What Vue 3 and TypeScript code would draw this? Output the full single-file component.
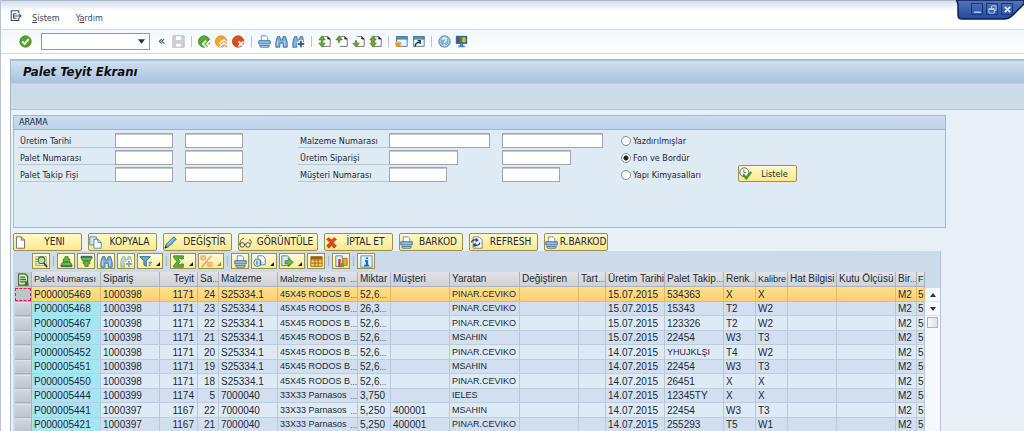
<script setup lang="ts">
import { ref } from 'vue'

interface Tool { icon: string; label: string; menu?: boolean; off?: boolean }
interface Column { title: string; width: number; end?: boolean; caps?: boolean; more?: boolean; snug?: boolean }

const command = ref('')
const filter = ref('fon')
const selected = ref(0)

const systemTools: Tool[][] = [
  [{ icon: 'back', label: 'Geri' }, { icon: 'exit', label: 'Çıkış' }, { icon: 'cancel', label: 'İptal' }],
  [{ icon: 'printer', label: 'Yazdır' }, { icon: 'find', label: 'Bul' }, { icon: 'findnext', label: 'Sonrakini bul' }],
  [
    { icon: 'firstpage', label: 'İlk sayfa' }, { icon: 'prevpage', label: 'Önceki sayfa' },
    { icon: 'nextpage', label: 'Sonraki sayfa' }, { icon: 'lastpage', label: 'Son sayfa' },
  ],
  [{ icon: 'newwin', label: 'Yeni oturum' }, { icon: 'shortcut', label: 'Kısayol' }],
  [{ icon: 'help', label: 'Yardım' }, { icon: 'monitor', label: 'Yerel düzen' }],
]

const actions = [
  { icon: 'page', label: 'YENI', width: 69 },
  { icon: 'copy', label: 'KOPYALA', width: 69 },
  { icon: 'pencil', label: 'DEĞİŞTİR', width: 69 },
  { icon: 'glasses', label: 'GÖRÜNTÜLE', width: 80 },
  { icon: 'redx', label: 'İPTAL ET', width: 69 },
  { icon: 'printer', label: 'BARKOD', width: 64 },
  { icon: 'refresh', label: 'REFRESH', width: 69 },
  { icon: 'printer', label: 'R.BARKOD', width: 64 },
]

const gridTools: Tool[][] = [
  [{ icon: 'detail', label: 'Ayrıntı' }],
  [
    { icon: 'sortup', label: 'Artan sırala' }, { icon: 'sortdown', label: 'Azalan sırala' },
    { icon: 'find', label: 'Bul' }, { icon: 'findnext', label: 'Sonrakini bul', off: true },
    { icon: 'funnel', label: 'Filtre', menu: true },
  ],
  [{ icon: 'sum', label: 'Toplam', menu: true }, { icon: 'subtotal', label: 'Alt toplam', menu: true, off: true }],
  [
    { icon: 'printer', label: 'Yazdır' }, { icon: 'views', label: 'Görünümler', menu: true },
    { icon: 'export', label: 'Dışa aktar', menu: true }, { icon: 'layout', label: 'Düzen' },
  ],
  [{ icon: 'chart', label: 'Grafik' }],
  [{ icon: 'info', label: 'Bilgi' }],
]

const columns: Column[] = [
  { title: 'Palet Numarası', width: 69, snug: true },
  { title: 'Sipariş', width: 59 },
  { title: 'Teyit', width: 38, end: true },
  { title: 'Sa', width: 21, end: true, more: true },
  { title: 'Malzeme', width: 59 },
  { title: 'Malzeme kısa m', width: 80, caps: true, more: true, snug: true },
  { title: 'Miktar', width: 33 },
  { title: 'Müşteri', width: 59 },
  { title: 'Yaratan', width: 70, caps: true },
  { title: 'Değiştiren', width: 59 },
  { title: 'Tart', width: 27, more: true },
  { title: 'Üretim Tarihi', width: 59 },
  { title: 'Palet Takip', width: 59, more: true },
  { title: 'Renk', width: 32, more: true },
  { title: 'Kalibre', width: 32, snug: true },
  { title: 'Hat Bilgisi', width: 49 },
  { title: 'Kutu Ölçüsü', width: 59 },
  { title: 'Bir', width: 21, more: true },
  { title: 'F', width: 8, snug: true },
]

const rodos = '45X45 RODOS B~'
const parna = '33X33 Parnasos~'
function row(no: string, order: string, teyit: string, sa: string, mat: string, text: string, qty: string,
  customer: string, user: string, date: string, slip: string, tone: string, cal: string): string[] {
  return [no, order, teyit, sa, mat, text, qty, customer, user, '', '', date, slip, tone, cal, '', '', 'M2', '5']
}
const rows: string[][] = [
  row('P000005469', '1000398', '1171', '24', 'S25334.1', rodos, '52,6~', '', 'PINAR.CEVIKO', '15.07.2015', '534363', 'X', 'X'),
  row('P000005468', '1000398', '1171', '23', 'S25334.1', rodos, '26,3~', '', 'PINAR.CEVIKO', '15.07.2015', '15343', 'T2', 'W2'),
  row('P000005467', '1000398', '1171', '22', 'S25334.1', rodos, '52,6~', '', 'PINAR.CEVIKO', '15.07.2015', '123326', 'T2', 'W2'),
  row('P000005459', '1000398', '1171', '21', 'S25334.1', rodos, '52,6~', '', 'MSAHIN', '15.07.2015', '22454', 'W3', 'T3'),
  row('P000005452', '1000398', '1171', '20', 'S25334.1', rodos, '52,6~', '', 'PINAR.CEVIKO', '14.07.2015', 'YHUJKLŞI', 'T4', 'W2'),
  row('P000005451', '1000398', '1171', '19', 'S25334.1', rodos, '52,6~', '', 'MSAHIN', '14.07.2015', '22454', 'W3', 'T3'),
  row('P000005450', '1000398', '1171', '18', 'S25334.1', rodos, '52,6~', '', 'PINAR.CEVIKO', '14.07.2015', '26451', 'X', 'X'),
  row('P000005444', '1000399', '1174', '5', '7000040', parna, '3,750', '', 'IELES', '14.07.2015', '12345TY', 'X', 'X'),
  row('P000005441', '1000397', '1167', '22', '7000040', parna, '5,250', '400001', 'MSAHIN', '14.07.2015', '22454', 'W3', 'T3'),
  row('P000005421', '1000397', '1167', '21', '7000040', parna, '5,250', '400001', 'PINAR.CEVIKO', '14.07.2015', '255293', 'T5', 'W1'),
]
const isCut = (v: string) => v.endsWith('~')
const plain = (v: string) => v.replace('~', '')
</script>

<template>
  <div class="app">
    <svg class="defs" aria-hidden="true">
      <symbol id="i-session" viewBox="0 0 16 16"><path d="M11 4V1H1v13h10v-3M4 5h4M4 5v6h4M4 8h10M11 5l3 3-3 3" fill="none" stroke="#34496e" stroke-width="1.4" /></symbol>
      <symbol id="i-check" viewBox="0 0 16 16"><circle cx="8" cy="8" r="7" fill="#59a52c" stroke="#3f8220" /><path d="M4 8l3 3 5-6" fill="none" stroke="#fff" stroke-width="2.2" /></symbol>
      <symbol id="i-save" viewBox="0 0 16 16"><path d="M1 1h14v14H1z" fill="#d2d5d9" stroke="#b4b8bd" /><path d="M4 1h8v6H4zM4 10h8v5H4z" fill="#fff" stroke="#b9bdc2" /></symbol>
      <symbol id="i-back" viewBox="0 0 16 16"><circle cx="7.500" cy="8" r="7" fill="#5aa832" stroke="#3f8424" /><path d="M10 7l-4 4 4 4M15 7l-4 4 4 4" fill="none" stroke="#fff" stroke-width="2" /></symbol>
      <symbol id="i-exit" viewBox="0 0 16 16"><circle cx="7.500" cy="8" r="7" fill="#f7a823" stroke="#dd8a10" /><path d="M6 11l5-4 4 4M6 15l5-4 4 4" fill="none" stroke="#fff" stroke-width="3" /><path d="M7 11l4-3 4 3M7 15l4-3 4 3" fill="none" stroke="#d8551c" /></symbol>
      <symbol id="i-cancel" viewBox="0 0 16 16"><circle cx="7.500" cy="8" r="7" fill="#d9501a" stroke="#b63c10" /><path d="M8 8l6 6M14 8l-6 6" stroke="#fff" stroke-width="2.2" /></symbol>
      <symbol id="i-printer" viewBox="0 0 16 16"><path d="M4 7V1h6l2 2v4" fill="#fff" stroke="#5580a5" /><path d="M1 7h14v4H1z" fill="#8fc0e4" stroke="#2c6594" /><path d="M2 13h12l-1 2H3z" fill="#cfe4f4" stroke="#2c6594" /></symbol>
      <symbol id="i-find" viewBox="0 0 16 16"><path d="M3 2h3l1 4h2l1-4h3l2 7v6h-5v-5H6v5H1V9z" fill="#7cb2dc" stroke="#2d6291" /><path d="M3 7v6M12 7v6" stroke="#c6e0f3" /></symbol>
      <symbol id="i-findnext" viewBox="0 0 16 16"><path d="M3 2h3l1 4h2l1-4h3l1 5v7h-4v-4H6v5H1V9z" fill="#7cb2dc" stroke="#2d6291" /><path d="M11 6v9M6 11h9" stroke="#fff" stroke-width="5" /><path d="M11 7v8M7 11h8" stroke="#2d6291" stroke-width="2.4" /></symbol>
      <symbol id="i-doc" viewBox="0 0 16 16"><path d="M6 2h6l3 3v9H6" fill="#fff" stroke="#555d66" /><path d="M12 2v3h3z" fill="#2d3338" stroke="#2d3338" /></symbol>
      <symbol id="i-firstpage" viewBox="0 0 16 16"><use href="#i-doc" /><path d="M1 6l4-5 4 5H6v4h3l-4 5-4-5h3V6z" fill="#65a92e" stroke="#3e7d1c" stroke-width=".8" /></symbol>
      <symbol id="i-prevpage" viewBox="0 0 16 16"><use href="#i-doc" /><path d="M1 6l4-5 4 5H6v3H4V6z" fill="#65a92e" stroke="#3e7d1c" stroke-width=".8" /></symbol>
      <symbol id="i-nextpage" viewBox="0 0 16 16"><use href="#i-doc" /><path d="M1 10h3V7h2v3h3l-4 5z" fill="#65a92e" stroke="#3e7d1c" stroke-width=".8" /></symbol>
      <symbol id="i-lastpage" viewBox="0 0 16 16"><use href="#i-doc" /><path d="M1 6l4-5 4 5H7v4h2l-4 5-4-5h2V6z" fill="#65a92e" stroke="#3e7d1c" stroke-width=".8" /></symbol>
      <symbol id="i-newwin" viewBox="0 0 16 16"><path d="M2 2h13v12H2z" fill="#e9f3fb" stroke="#3a6d9a" /><path d="M2 2h13v3H2z" fill="#5c9bd0" stroke="#3a6d9a" /><path d="M4 8v7M0 11h8M1 9l6 5M7 9l-6 5" stroke="#f29a1c" stroke-width="1.6" /></symbol>
      <symbol id="i-shortcut" viewBox="0 0 16 16"><path d="M2 2h13v12H2z" fill="#e9f3fb" stroke="#3a6d9a" /><path d="M2 2h13v3H2z" fill="#5c9bd0" stroke="#3a6d9a" /><path d="M4 14c0-4 2-5 5-5M7 7h3v4" fill="none" stroke="#222" stroke-width="1.6" /></symbol>
      <symbol id="i-help" viewBox="0 0 16 16"><circle cx="8" cy="8" r="7" fill="#7fb1d8" stroke="#41779f" /><circle cx="8" cy="8" r="5.500" fill="none" stroke="#cfe3f2" /><path d="M6 6c0-3 4-3 4 0 0 2-2 1-2 4M8 11v2" fill="none" stroke="#fff" stroke-width="1.6" /></symbol>
      <symbol id="i-monitor" viewBox="0 0 16 16"><path d="M1 1h14v10H1z" fill="#1f6eb4" /><path d="M3 3h4v6H3z" fill="#d5281e" /><path d="M6 3h4v6H6z" fill="#2f9b37" /><path d="M9 3h4v6H9z" fill="#f0b61d" /><path d="M6 11h4v2h2v2H4v-2h2z" fill="#3b8ac6" /></symbol>
      <symbol id="i-page" viewBox="0 0 16 16"><path d="M3 1h6l4 4v10H3z" fill="#fff" stroke="#555" /><path d="M9 1v4h4" fill="none" stroke="#555" /></symbol>
      <symbol id="i-copy" viewBox="0 0 16 16"><path d="M1 1h8v10H1z" fill="#d9eaf7" stroke="#3a74a6" /><path d="M6 4h5l4 4v7H6z" fill="#fff" stroke="#3a74a6" /><path d="M11 4v4h4" fill="none" stroke="#3a74a6" /></symbol>
      <symbol id="i-pencil" viewBox="0 0 16 16"><path d="M1 15l2-5 9-9 3 3-9 9z" fill="#69a9dc" stroke="#235f94" /><path d="M1 15l1-3 2 2z" fill="#222" /><path d="M5 10l7-7" stroke="#c8e2f5" /></symbol>
      <symbol id="i-glasses" viewBox="0 0 16 16"><circle cx="4" cy="11" r="2.800" fill="#e9f3e0" stroke="#333" /><circle cx="11" cy="11" r="2.800" fill="#e9f3e0" stroke="#333" /><path d="M1 11C1 6 3 3 6 3M7 10h1M14 10c2-3 1-6-2-5" fill="none" stroke="#333" /></symbol>
      <symbol id="i-redx" viewBox="0 0 16 16"><path d="M2 4l3-2 3 3 3-3 3 2-4 4 4 4-3 3-3-4-3 4-3-3 4-4z" fill="#e0491c" stroke="#a82c0c" stroke-width=".8" /></symbol>
      <symbol id="i-refresh" viewBox="0 0 16 16"><path d="M4 1h7l4 4v10H4z" fill="#fff" stroke="#666" /><path d="M2 8c0-3 3-4 6-3M12 8c0 3-3 4-6 3" fill="none" stroke="#1e4fa8" stroke-width="1.800" /><path d="M7 2l4 3-4 3zM7 8v6l-4-3z" fill="#1e4fa8" /></symbol>
      <symbol id="i-run" viewBox="0 0 16 16"><circle cx="6.500" cy="6.500" r="5.500" fill="#fff" stroke="#444" /><path d="M6 3v4h3" fill="none" stroke="#444" /><path d="M5 9l4 5 6-8" fill="none" stroke="#3f9a35" stroke-width="2.800" /></symbol>
      <symbol id="i-detail" viewBox="0 0 16 16"><path d="M1 2h13v11H1z" fill="#fff" stroke="#9a9a80" /><path d="M1 5h4M1 8h3M1 11h5" stroke="#6ba052" /><circle cx="8" cy="6.500" r="4.200" fill="#b9dd9f" stroke="#3c6b2c" stroke-width="1.400" /><path d="M11 10l4 5" stroke="#333" stroke-width="2" /></symbol>
      <symbol id="i-sortup" viewBox="0 0 16 16"><path d="M6 2h4v3h2v3H4V5h2z" fill="#6cb544" stroke="#3c7d29" /><path d="M3 9h10l2 4H1z" fill="#6cb544" stroke="#33752d" /><path d="M1 14h14" stroke="#2e6e86" stroke-width="2" /></symbol>
      <symbol id="i-sortdown" viewBox="0 0 16 16"><path d="M1 2h14" stroke="#2e6e86" stroke-width="2" /><path d="M1 3h14l-2 4H3z" fill="#6cb544" stroke="#33752d" /><path d="M4 8h8v3h-2v3H6v-3H4z" fill="#6cb544" stroke="#3c7d29" /></symbol>
      <symbol id="i-funnel" viewBox="0 0 16 16"><path d="M1 2h13L9 7v7l-3-2V7z" fill="#6aa9da" stroke="#245f92" /><path d="M12 9h4M12 11h3M12 13h2" stroke="#245f92" /></symbol>
      <symbol id="i-sum" viewBox="0 0 16 16"><path d="M2 1h12v4h-3V4H7l3 4-3 4h4v-1h3v4H2v-2l4-5-4-5z" fill="#62b33b" stroke="#357a25" /></symbol>
      <symbol id="i-subtotal" viewBox="0 0 16 16"><path d="M1 1h6v5H1zM9 9h6v5H9z" fill="#f08a58" stroke="#d0602c" /><path d="M14 1L2 15" stroke="#d0602c" stroke-width="2" /></symbol>
      <symbol id="i-views" viewBox="0 0 16 16"><path d="M6 1h6l3 3v8H6z" fill="#fff" stroke="#3570a5" /><circle cx="5.500" cy="9.500" r="4.500" fill="#d5e9f8" stroke="#2d6ba5" /><path d="M5 7v5M9 6v6" stroke="#2d6ba5" stroke-width="1.400" /></symbol>
      <symbol id="i-export" viewBox="0 0 16 16"><path d="M1 1h7l3 3v9H1z" fill="#d8e8f5" stroke="#3570a5" /><path d="M5 7h4V4l6 5-6 5v-3H5z" fill="#6cb83f" stroke="#3a7c25" /></symbol>
      <symbol id="i-layout" viewBox="0 0 16 16"><path d="M1 2h14v12H1z" fill="#f8cf55" stroke="#85631c" /><path d="M1 2h14v3H1z" fill="#b25a20" /><path d="M1 6h14M1 10h14M6 2v12M10 2v12" stroke="#85631c" /></symbol>
      <symbol id="i-chart" viewBox="0 0 16 16"><path d="M1 1h8v13H1z" fill="#dcecf8" stroke="#3570a5" /><path d="M4 5h3v10H4z" fill="#d83a1c" /><path d="M7 10h4v5H7z" fill="#4fa53a" /><path d="M10 4h5v9h-5z" fill="#f0a52a" stroke="#b36f14" /></symbol>
      <symbol id="i-info" viewBox="0 0 16 16"><path d="M1 1h14v14H1z" fill="#dff1fb" stroke="#2b8cc4" /><path d="M7 3h3v2H7zM6 6h4v6h1v2H5v-2h2V8H6z" fill="#1674b5" /></symbol>
      <symbol id="i-rows" viewBox="0 0 16 16"><path d="M2 1h8l3 3v11H2z" fill="#d9efc5" stroke="#3f6b2c" stroke-width="1.400" /><path d="M4 5h6M4 8h7M4 11h7" stroke="#3f6b2c" stroke-width="1.600" /><path d="M11 9l4 6h-6z" fill="#3f6b2c" /></symbol>
    </svg>

    <header class="menubar">
      <svg class="ico session"><use href="#i-session" /></svg>
      <nav class="menus">
        <a href="#sistem"><u>S</u>istem</a>
        <a href="#yardim">Y<u>a</u>rdım</a>
      </nav>
      <div class="window">
        <svg class="shape" viewBox="0 0 68 21" aria-hidden="true">
          <defs><linearGradient id="g-win" x1="0" y1="0" x2="0" y2="1"><stop offset="0" stop-color="#5377b8" /><stop offset="1" stop-color="#2348a0" /></linearGradient></defs>
          <path d="M0 0h68v4L57 15c-3 3-5 4-9 4H6c-4 0-4-2-4-5V5C2 2 1 1 0 0z" fill="url(#g-win)" stroke="#101c48" stroke-width="1.500" />
        </svg>
        <div class="winbtns">
          <button type="button" aria-label="Küçült"><svg viewBox="0 0 10 10"><path d="M1 8h8" stroke="#c5d5f3" stroke-width="1.500" /></svg></button>
          <button type="button" aria-label="Önceki boyut"><svg viewBox="0 0 10 10"><path d="M4 4V1h5v5H7M1 4h6v5H1zM1 5h6" fill="none" stroke="#c5d5f3" /></svg></button>
          <button type="button" aria-label="Kapat"><svg viewBox="0 0 10 10"><path d="M2 2l6 6M8 2L2 8" stroke="#dbe5f8" stroke-width="2" /></svg></button>
        </div>
      </div>
    </header>

    <div class="toolbar">
      <button type="button" class="tool" aria-label="Giriş"><svg class="ico"><use href="#i-check" /></svg></button>
      <div class="command">
        <input v-model="command" type="text" aria-label="Komut alanı">
        <button type="button" aria-label="Komut geçmişi"><svg viewBox="0 0 8 5"><path d="M0 0h8L4 5z" fill="#1d3461" /></svg></button>
      </div>
      <button type="button" class="tool chev" aria-label="Komut alanını gizle">«</button>
      <button type="button" class="tool" aria-label="Kaydet"><svg class="ico"><use href="#i-save" /></svg></button>
      <div v-for="(group, g) in systemTools" :key="g" class="group">
        <button v-for="t in group" :key="t.icon" type="button" class="tool" :aria-label="t.label">
          <svg class="ico"><use :href="'#i-' + t.icon" /></svg>
        </button>
      </div>
    </div>

    <main class="screen">
      <h1>Palet Teyit Ekranı</h1>
      <div class="appbar"></div>

      <section class="work">
        <form class="search" @submit.prevent>
          <h2>ARAMA</h2>
          <div class="fields">
            <div class="block first">
              <label for="f-date">Üretim Tarihi</label><input id="f-date" type="text"><input type="text" aria-label="Üretim Tarihi bitiş">
              <label for="f-pallet">Palet Numarası</label><input id="f-pallet" type="text"><input type="text" aria-label="Palet Numarası bitiş">
              <label for="f-slip">Palet Takip Fişi</label><input id="f-slip" type="text"><input type="text" aria-label="Palet Takip Fişi bitiş">
            </div>
            <div class="block second">
              <label for="f-mat">Malzeme Numarası</label><input id="f-mat" class="long" type="text"><input class="long" type="text" aria-label="Malzeme Numarası bitiş">
              <label for="f-order">Üretim Siparişi</label><input id="f-order" class="mid" type="text"><input class="mid" type="text" aria-label="Üretim Siparişi bitiş">
              <label for="f-cust">Müşteri Numarası</label><input id="f-cust" type="text"><input type="text" aria-label="Müşteri Numarası bitiş">
            </div>
            <div class="radios">
              <label><input v-model="filter" type="radio" name="filter" value="yaz">Yazdırılmışlar</label>
              <label><input v-model="filter" type="radio" name="filter" value="fon">Fon ve Bordür</label>
              <label><input v-model="filter" type="radio" name="filter" value="yapi">Yapı Kimyasalları</label>
            </div>
            <button type="submit" class="btn list"><svg class="ico"><use href="#i-run" /></svg><span>Listele</span></button>
          </div>
        </form>

        <div class="actions">
          <button v-for="a in actions" :key="a.label" type="button" class="btn" :style="{ width: a.width + 'px' }">
            <svg class="ico"><use :href="'#i-' + a.icon" /></svg><span>{{ a.label }}</span>
          </button>
        </div>

        <section class="grid">
          <div class="gridtools">
            <div v-for="(group, g) in gridTools" :key="g" class="gt-group">
              <button v-for="t in group" :key="t.icon" type="button" class="gt" :class="{ menu: t.menu, off: t.off }" :aria-label="t.label">
                <svg class="ico"><use :href="'#i-' + t.icon" /></svg><i v-if="t.menu" class="corner"></i>
              </button>
            </div>
          </div>
          <div class="gridbody">
            <table>
              <colgroup>
                <col class="selcol">
                <col v-for="c in columns" :key="c.title" :style="{ width: c.width + 'px' }">
              </colgroup>
              <thead>
                <tr>
                  <th class="sel"><svg class="ico"><use href="#i-rows" /></svg></th>
                  <th v-for="c in columns" :key="c.title" scope="col" :class="{ end: c.title === 'Teyit', snug: c.snug }">
                    <div class="cell"><span>{{ c.title }}</span><i v-if="c.more" class="more">...</i></div>
                  </th>
                </tr>
              </thead>
              <tbody>
                <tr v-for="(r, i) in rows" :key="r[0]" :class="{ on: selected === i }">
                  <td class="sel"><button type="button" :aria-label="'Satır seç ' + r[0]" @click="selected = i"></button></td>
                  <td v-for="(v, k) in r" :key="k" :class="{ key: k === 0, end: columns[k].end, qty: k === 6, caps: columns[k].caps || v === 'YHUJKLŞI' }">
                    <div class="cell"><span>{{ plain(v) }}</span><i v-if="isCut(v)" class="more">...</i></div>
                  </td>
                </tr>
              </tbody>
            </table>
            <div class="scroll">
              <button type="button" aria-label="Yukarı"><svg viewBox="0 0 6 4"><path d="M0 4h6L3 0z" fill="#333" /></svg></button>
              <button type="button" aria-label="Aşağı"><svg viewBox="0 0 6 4"><path d="M0 0h6L3 4z" fill="#333" /></svg></button>
              <div class="thumb"></div>
            </div>
          </div>
        </section>
      </section>
    </main>
  </div>
</template>

<style>
body { margin: 0; overflow: hidden; background: #fff; }
</style>

<style scoped>
* { box-sizing: border-box; }
.app {
  position: relative;
  display: flex;
  flex-direction: column;
  min-height: 100vh;
  border-left: 1px solid #b9c3d3;
  font: 9px/12px "DejaVu Sans Condensed", "Open Sans", sans-serif;
  color: #1c2733;
}
.defs { position: absolute; width: 0; height: 0; }
button, input { margin: 0; padding: 0; font: inherit; color: inherit; }
button { display: flex; align-items: center; justify-content: center; border: 0; background: none; }
.ico { display: block; flex: none; width: 13px; height: 13px; }

.menubar {
  display: flex;
  align-items: center;
  height: 30px;
  padding: 6px 0 0 9px;
  border-top: 1px solid #a9b8cb;
  border-bottom: 1px solid #cddbe6;
  background: linear-gradient(#d3deec, #fff 10px);
}
.session { height: 12px; margin-bottom: 4px; }
.menus { display: flex; gap: 16px; margin-left: 9px; }
.menus a { color: #34496e; text-decoration: none; }
.window { position: absolute; top: 0; right: 0; width: 68px; height: 21px; }
.shape { display: block; width: 68px; height: 21px; }
.winbtns { position: absolute; top: 3px; left: 15px; display: flex; gap: 3px; }
.winbtns button { width: 12px; height: 12px; border: 1px solid #1c367d; }
.winbtns svg { width: 9px; height: 9px; }

.toolbar {
  display: flex;
  align-items: center;
  height: 24px;
  padding-left: 16px;
  border-bottom: 1px solid #cddbe6;
  background: linear-gradient(#f1f7fb, #fff);
}
.tool { width: 17px; height: 18px; }
.command { display: flex; width: 109px; height: 17px; margin: 0 3px 0 7px; border: 1px solid #8e99a6; background: #fff; }
.command input { flex: 1; min-width: 0; border: 0; outline: 0; background: none; }
.command button { width: 15px; }
.command svg { width: 7px; height: 5px; }
.chev { padding-bottom: 2px; font-size: 13px; color: #26344c; }
.group { display: flex; align-items: center; }
.group::before { content: ""; width: 1px; height: 11px; margin: 0 4px; background: #b4c6da; }

.screen { display: flex; flex: 1; flex-direction: column; margin: 5px 0 0 9px; border-left: 1px solid #a4b9ce; }
h1 {
  height: 25px;
  margin: 0;
  padding: 0 12px;
  border-top: 2px solid #aabed3;
  border-bottom: 1px solid #b9cee0;
  background: linear-gradient(#cfe0f0, #a9c2de);
  font: italic bold 13px/21px "DejaVu Sans Condensed", "Open Sans", sans-serif;
  color: #0b0d10;
}
.appbar { height: 26px; border-bottom: 1px solid #b3c2d2; background: #cddce9; }
.work { flex: 1; padding: 5px 78px 0 2px; background: linear-gradient(90deg, #e9f3fa, #e8eff7); }

.search { height: 113px; border: 1px solid #a3b9d1; background: #deeaf4; }
h2 { height: 14px; margin: 0; padding-left: 5px; border-bottom: 1px solid #9eb5ce; background: linear-gradient(#cbdcee, #bfd4e9); font: inherit; line-height: 13px; }
.fields { display: flex; padding: 3px 4px; }
.block { display: grid; grid-auto-rows: 15px; row-gap: 2px; }
.first { grid-template-columns: 97px 70px 58px; margin-right: 55px; }
.second { grid-template-columns: 91px 113px 101px; margin-right: 18px; }
.block label { padding-left: 2px; border-bottom: 1px solid #b8c6d3; line-height: 16px; }
.block input { width: 58px; height: 15px; border: 1px solid #a0a6ad; outline: 0; background: #fff; box-shadow: inset 0 1px #c6cacf; }
.block .long { width: 101px; }
.block .mid { width: 69px; }
.radios { display: flex; flex-direction: column; gap: 2px; width: 117px; }
.radios label { display: flex; align-items: center; gap: 2px; height: 15px; white-space: nowrap; }
.radios input { appearance: none; width: 10px; height: 10px; border: 1px solid #888f96; border-radius: 50%; background: #fff; }
.radios input:checked { background: radial-gradient(circle, #222 2px, #fff 3px); }
.btn {
  gap: 1px;
  height: 17px;
  border: 1px solid #a18e4c;
  border-radius: 2px;
  background: linear-gradient(#fffad0, #fbe88c);
  white-space: nowrap;
}
.btn span { flex: 1; }
.list { width: 59px; align-self: flex-end; }

.actions { display: flex; gap: 6px; margin-top: 5px; }
.actions .btn { height: 18px; font-size: 10px; }

.grid { margin-right: 5px; border-right: 1px solid #b3c4d6; background: #ccdbe9; }
.gridtools { display: flex; height: 21px; padding: 2px 0 0 19px; }
.gt-group { display: flex; gap: 2px; }
.gt-group + .gt-group::before { content: ""; width: 1px; height: 10px; margin: 3px 1px 0 3px; background: #a3b6ca; }
.gt { width: 18px; height: 16px; border: 1px solid #a18e4c; background: linear-gradient(#fffcdc, #fbeb9c); }
.gt.menu { width: 26px; gap: 4px; justify-content: flex-end; }
.corner { align-self: flex-end; margin: 0 2px 2px 0; border: 2px solid; border-color: transparent #222 #222 transparent; }
.gt.off .ico, .gt.off .corner { opacity: .5; }

.gridbody { display: flex; padding-left: 2px; }
table { flex: 1; min-width: 0; width: 100%; border-collapse: separate; border-spacing: 0; table-layout: fixed; font: 10px/13px "Liberation Sans", Arial, sans-serif; color: #1d2836; }
.selcol { width: 17px; }
th, td { height: 14px; padding: 0; border-right: 1px solid #bac7d6; border-bottom: 1px solid #bfccdb; font-weight: normal; text-align: left; overflow: hidden; }
th { height: 15px; background: linear-gradient(#e0e3e8, #cdd1d9); border-color: #a9b2bf; }
.cell { display: flex; justify-content: space-between; height: 13px; padding-left: 2px; overflow: hidden; white-space: nowrap; }
th .cell { height: 14px; line-height: 14px; }
.end .cell { justify-content: flex-end; padding-right: 3px; }
.qty .cell { justify-content: flex-start; }
.more { flex: none; font-style: normal; font-size: 8px; line-height: 16px; }
tbody tr { background: #deebf6; }
tbody tr:nth-child(even) { background: #d2dff0; }
tbody tr:nth-child(odd) td { height: 15px; }
td.key { background: #a5e6f3; }
td.caps, th.snug { font-size: 9px; }
th:last-child .cell, td:last-child .cell { padding-left: 1px; }
.on td, .on td.key { background: linear-gradient(#ffe08c, #fbd272); border-color: #e3b765; }
.sel, .on td.sel { background: #c6ccd4; border-color: #a7afba; }
th.sel .ico { margin: 0 auto; }
td.sel button { width: 100%; height: 13px; border-top: 1px solid #e1e4e9; background: linear-gradient(#d2d6dc, #bfc5ce); }
.on td.sel button { border: 1px dashed #c8283c; background: #bfc3ca; }
.scroll { display: flex; flex-direction: column; width: 15px; padding: 0 1px; margin-top: 16px; background: #f5f8fc; }
.scroll button { height: 14px; border-bottom: 1px solid #dbe3ec; }
.scroll svg { width: 6px; height: 4px; }
.thumb { width: 11px; height: 11px; margin: 1px; border: 1px solid #aab4c2; background: linear-gradient(90deg, #f6f8fb, #dde3ec); }
</style>
